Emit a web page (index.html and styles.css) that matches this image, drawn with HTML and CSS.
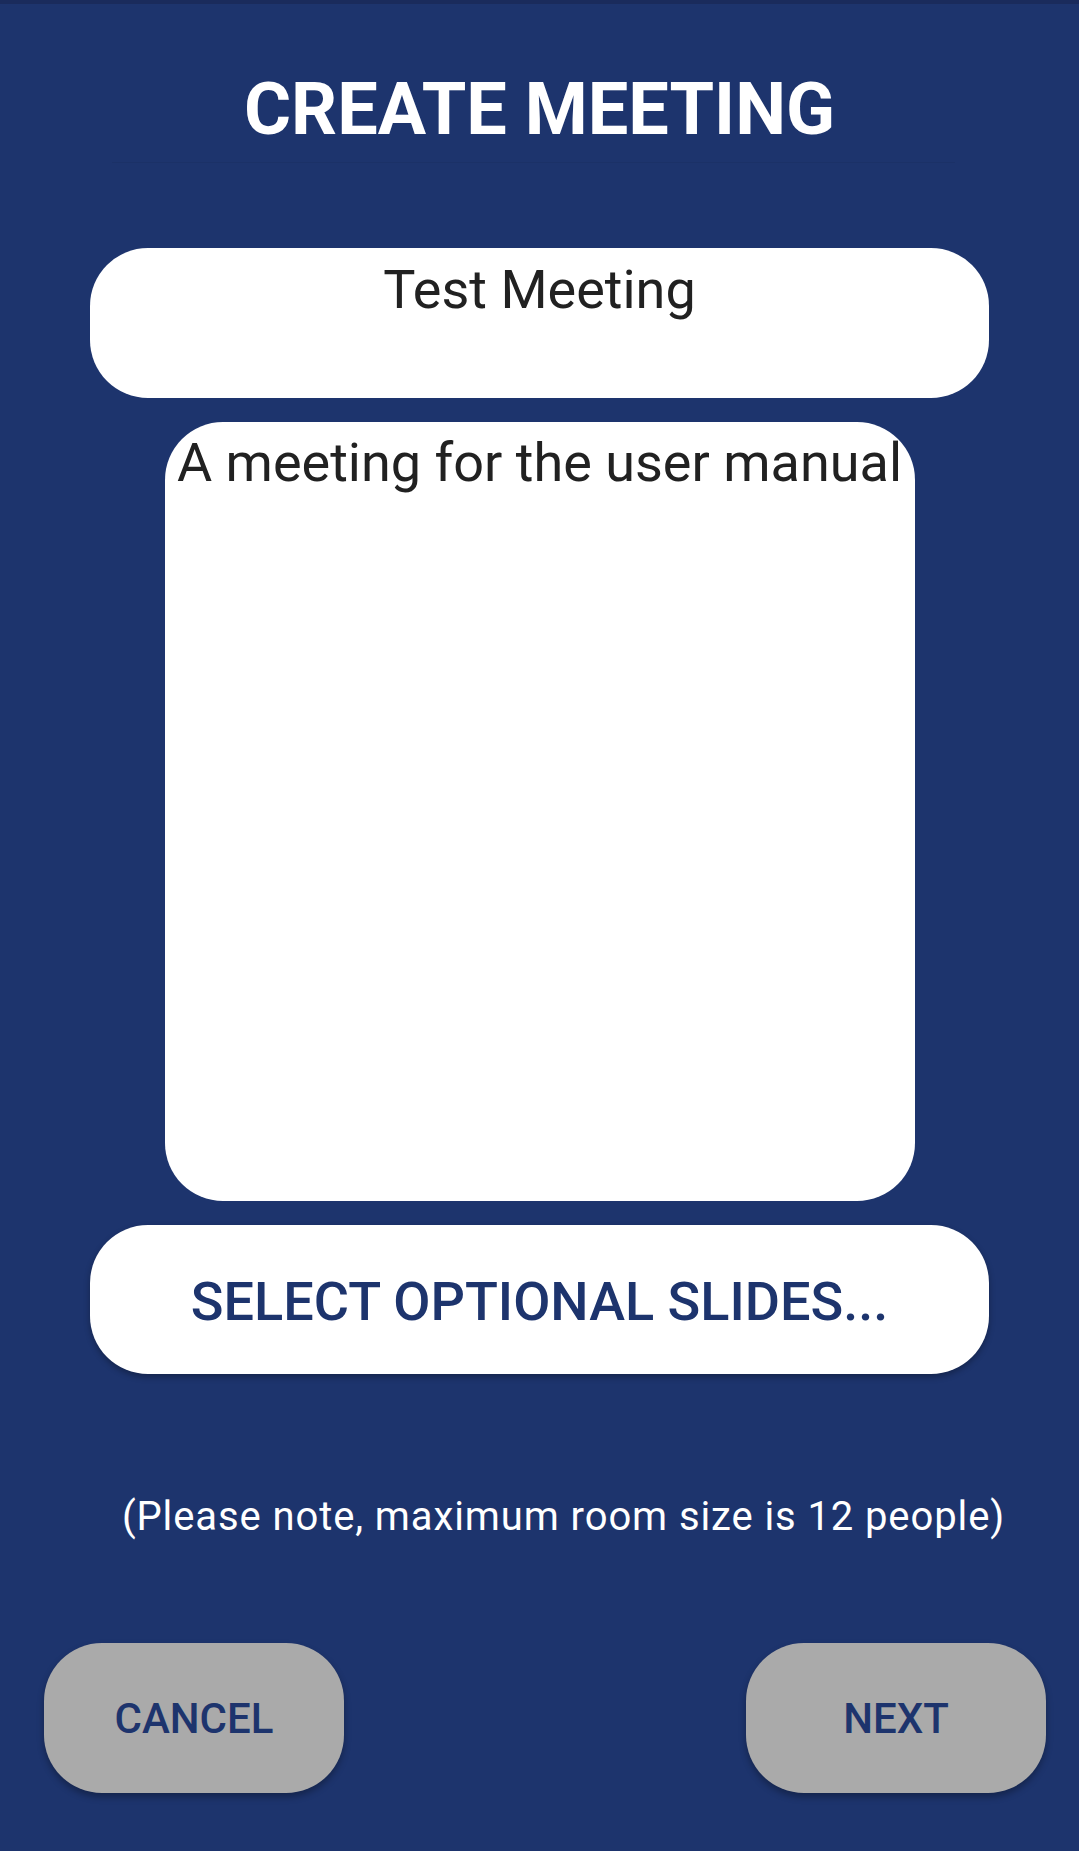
FILE: index.html
```html
<!DOCTYPE html>
<html lang="en">
<head>
<meta charset="utf-8">
<title>Create Meeting</title>
<link rel="stylesheet" href="styles.css">
</head>
<body>
<div class="status-strip"></div>
<main class="screen">
  <h1 class="title">CREATE MEETING</h1>
  <div class="title-rule"></div>
  <input class="field field-name" type="text" value="Test Meeting">
  <textarea class="field field-desc" wrap="off">A meeting for the user manual</textarea>
  <button class="slides-btn" type="button">SELECT OPTIONAL SLIDES...</button>
  <p class="note">(Please note, maximum room size is 12 people)</p>
  <div class="actions">
    <button class="action-btn" type="button">CANCEL</button>
    <button class="action-btn" type="button">NEXT</button>
  </div>
</main>
</body>
</html>
```
FILE: styles.css
```css
* { box-sizing: border-box; }

html, body {
  margin: 0;
  padding: 0;
  height: 100%;
}

body {
  background: #1d346d;
  font-family: Roboto, "Noto Sans", "Liberation Sans", sans-serif;
  overflow: hidden;
}

.status-strip {
  height: 4px;
  background: #1a2b5c;
}

.screen {
  display: flex;
  flex-direction: column;
  align-items: center;
}

.title {
  margin: 70px 0 0;
  font-size: 72px;
  line-height: 72px;
  font-weight: 700;
  color: #ffffff;
  text-align: center;
}

.title-rule {
  align-self: flex-start;
  margin: 16px 0 0 112px;
  width: 843px;
  height: 1px;
  background: rgba(0, 0, 0, 0.05);
}

.field {
  display: block;
  border: none;
  outline: none;
  background: #ffffff;
  color: #212121;
  font-family: Roboto, "Noto Sans", "Liberation Sans", sans-serif;
  font-size: 54px;
  font-weight: 400;
  text-align: center;
  border-radius: 58px;
}

.field-name {
  margin-top: 85px;
  width: 899px;
  height: 150px;
  padding: 14px 20px 82px;
  line-height: 54px;
}

.field-desc {
  margin-top: 24px;
  width: 750px;
  height: 779px;
  padding: 14px 4px;
  line-height: 54px;
  resize: none;
  overflow: hidden;
}

.slides-btn {
  margin-top: 24px;
  width: 899px;
  height: 149px;
  border: none;
  border-radius: 58px;
  background: #ffffff;
  color: #1d346d;
  font-family: Roboto, "Noto Sans", "Liberation Sans", sans-serif;
  font-size: 54px;
  font-weight: 500;
  box-shadow: 0 3px 6px rgba(0, 0, 0, 0.3);
  padding: 4px 0 0;
}

.note {
  align-self: stretch;
  margin: 120px 0 0;
  padding-left: 48px;
  color: #ffffff;
  font-size: 40px;
  line-height: 46px;
  letter-spacing: 0.9px;
  text-align: center;
}

.actions {
  align-self: stretch;
  display: flex;
  justify-content: space-between;
  margin-top: 103px;
  padding: 0 33px 0 44px;
}

.action-btn {
  width: 300px;
  height: 150px;
  border: none;
  border-radius: 58px;
  background: #aaaaaa;
  color: #1d346d;
  font-family: Roboto, "Noto Sans", "Liberation Sans", sans-serif;
  font-size: 42px;
  font-weight: 500;
  padding: 0;
  box-shadow: 0 4px 7px rgba(0, 0, 0, 0.3);
}
```
